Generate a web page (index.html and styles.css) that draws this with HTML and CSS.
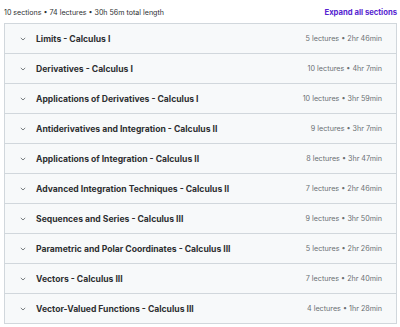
FILE: index.html
```html
<!DOCTYPE html>
<html lang="en">
<head>
    <meta charset="UTF-8">
    <meta name="viewport" content="width=device-width, initial-scale=1.0">
    <title>Course content</title>
    <link rel="stylesheet" href="styles.css">
</head>
<body>
    <div class="curriculum">
        <div class="summary">
            <span>10 sections • 74 lectures • 30h 56m total length</span>
            <a href="#" class="expand">Expand all sections</a>
        </div>
        <div class="sections">
            <div class="section">
                <span class="chevron"><svg width="8" height="8" viewBox="0 0 8 8"><path d="M1.8 2.9 4 5 6.2 2.9" fill="none" stroke="#6a6f73" stroke-width="0.9"/></svg></span>
                <span class="title">Limits - Calculus I</span>
                <span class="meta">5 lectures • 2hr 46min</span>
            </div>
            <div class="section">
                <span class="chevron"><svg width="8" height="8" viewBox="0 0 8 8"><path d="M1.8 2.9 4 5 6.2 2.9" fill="none" stroke="#6a6f73" stroke-width="0.9"/></svg></span>
                <span class="title">Derivatives - Calculus I</span>
                <span class="meta">10 lectures • 4hr 7min</span>
            </div>
            <div class="section">
                <span class="chevron"><svg width="8" height="8" viewBox="0 0 8 8"><path d="M1.8 2.9 4 5 6.2 2.9" fill="none" stroke="#6a6f73" stroke-width="0.9"/></svg></span>
                <span class="title">Applications of Derivatives - Calculus I</span>
                <span class="meta">10 lectures • 3hr 59min</span>
            </div>
            <div class="section">
                <span class="chevron"><svg width="8" height="8" viewBox="0 0 8 8"><path d="M1.8 2.9 4 5 6.2 2.9" fill="none" stroke="#6a6f73" stroke-width="0.9"/></svg></span>
                <span class="title">Antiderivatives and Integration - Calculus II</span>
                <span class="meta">9 lectures • 3hr 7min</span>
            </div>
            <div class="section">
                <span class="chevron"><svg width="8" height="8" viewBox="0 0 8 8"><path d="M1.8 2.9 4 5 6.2 2.9" fill="none" stroke="#6a6f73" stroke-width="0.9"/></svg></span>
                <span class="title">Applications of Integration - Calculus II</span>
                <span class="meta">8 lectures • 3hr 47min</span>
            </div>
            <div class="section">
                <span class="chevron"><svg width="8" height="8" viewBox="0 0 8 8"><path d="M1.8 2.9 4 5 6.2 2.9" fill="none" stroke="#6a6f73" stroke-width="0.9"/></svg></span>
                <span class="title">Advanced Integration Techniques - Calculus II</span>
                <span class="meta">7 lectures • 2hr 46min</span>
            </div>
            <div class="section">
                <span class="chevron"><svg width="8" height="8" viewBox="0 0 8 8"><path d="M1.8 2.9 4 5 6.2 2.9" fill="none" stroke="#6a6f73" stroke-width="0.9"/></svg></span>
                <span class="title">Sequences and Series - Calculus III</span>
                <span class="meta">9 lectures • 3hr 50min</span>
            </div>
            <div class="section">
                <span class="chevron"><svg width="8" height="8" viewBox="0 0 8 8"><path d="M1.8 2.9 4 5 6.2 2.9" fill="none" stroke="#6a6f73" stroke-width="0.9"/></svg></span>
                <span class="title">Parametric and Polar Coordinates - Calculus III</span>
                <span class="meta">5 lectures • 2hr 26min</span>
            </div>
            <div class="section">
                <span class="chevron"><svg width="8" height="8" viewBox="0 0 8 8"><path d="M1.8 2.9 4 5 6.2 2.9" fill="none" stroke="#6a6f73" stroke-width="0.9"/></svg></span>
                <span class="title">Vectors - Calculus III</span>
                <span class="meta">7 lectures • 2hr 40min</span>
            </div>
            <div class="section">
                <span class="chevron"><svg width="8" height="8" viewBox="0 0 8 8"><path d="M1.8 2.9 4 5 6.2 2.9" fill="none" stroke="#6a6f73" stroke-width="0.9"/></svg></span>
                <span class="title">Vector-Valued Functions - Calculus III</span>
                <span class="meta">4 lectures • 1hr 28min</span>
            </div>
        </div>
    </div>
</body>
</html>
```
FILE: styles.css
```css
body {
    margin: 0;
    font-family: Inter, "Noto Sans", sans-serif;
    color: #2d2f31;
    background-color: #fff;
}

.curriculum {
    padding: 6px 3px 0 4px;
}

.summary {
    display: flex;
    justify-content: space-between;
    align-items: center;
    height: 13px;
    font-size: 7.1px;
    color: #2d2f31;
    margin-bottom: 4px;
}

.expand {
    color: #5624d0;
    font-size: 7.7px;
    font-weight: 700;
    text-decoration: none;
}

.sections {
    border: 1px solid #d1d7dc;
}

.section {
    display: flex;
    align-items: center;
    height: 29px;
    padding: 0 14px 0 14px;
    background-color: #f7f9fa;
    border-bottom: 1px solid #d1d7dc;
}

.section:last-child {
    border-bottom: none;
}

.chevron {
    display: flex;
    width: 8px;
    margin-right: 9px;
}

.title {
    flex: 1;
    font-size: 8.6px;
    font-weight: 700;
}

.meta {
    font-size: 7.2px;
    color: #6a6f73;
}
```
